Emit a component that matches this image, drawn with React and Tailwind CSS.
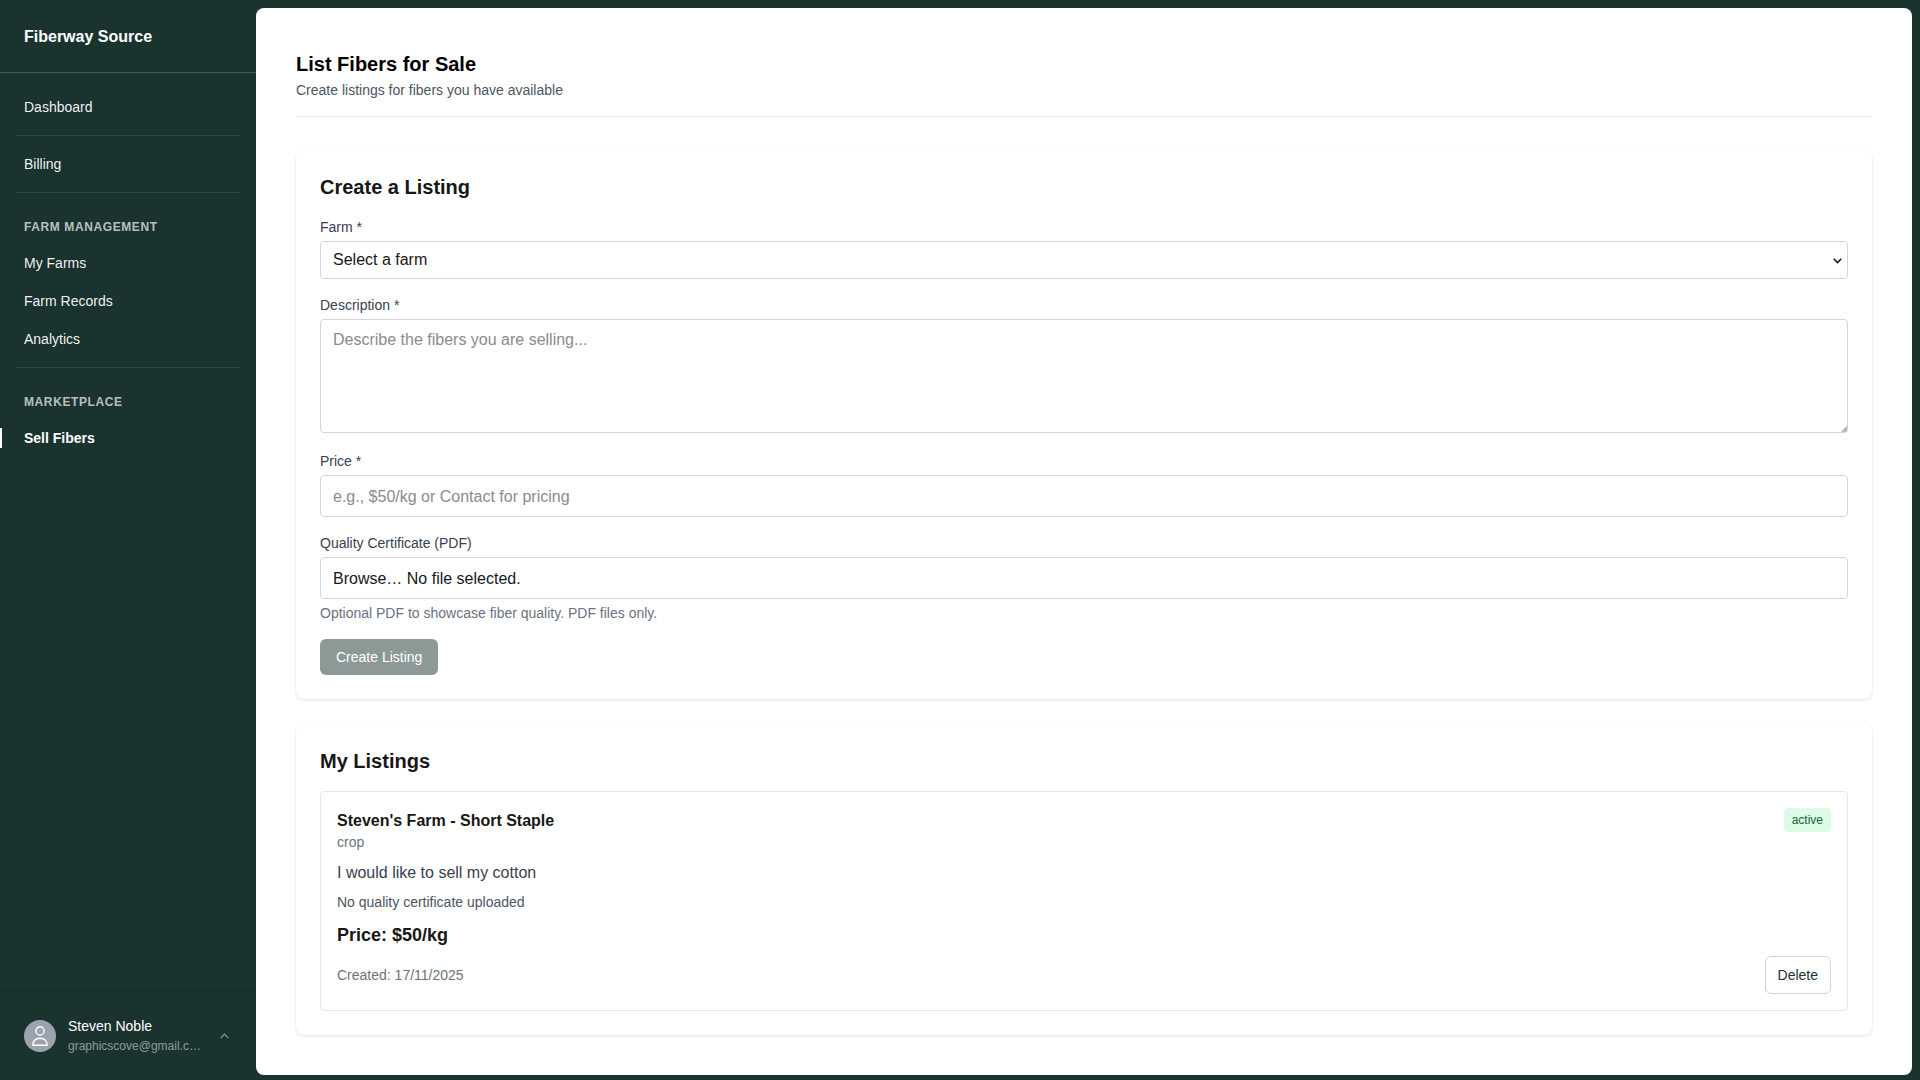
import React, { useState } from 'react';

const NavItem = ({ label, active }) => (
  <a
    href="#"
    className={`my-0.5 box-content flex h-5 items-center border-l-2 pl-[22px] text-sm ${active ? 'border-white font-bold text-white' : 'border-transparent text-white/95'}`}
  >
    {label}
  </a>
);

const Divider = () => (
  <div className="py-4">
    <div className="mx-4 h-px bg-white/10" />
  </div>
);

const SectionTitle = ({ children }) => (
  <h3 className="px-6 pb-0.5 text-xs font-bold uppercase tracking-[0.6px] text-white/70">{children}</h3>
);

const Sidebar = () => (
  <aside className="flex w-64 shrink-0 flex-col">
    <div className="border-b border-white/20 px-6 pb-[23px] pt-[25px]">
      <div className="text-base font-bold leading-6 text-white">Fiberway Source</div>
    </div>

    <nav className="flex-1 pt-[22px]">
      <NavItem label="Dashboard" />
      <Divider />
      <NavItem label="Billing" />
      <Divider />

      {/* Farm management */}
      <div className="flex flex-col gap-3.5 pt-2.5">
        <SectionTitle>Farm Management</SectionTitle>
        <NavItem label="My Farms" />
        <NavItem label="Farm Records" />
        <NavItem label="Analytics" />
      </div>
      <Divider />

      {/* Marketplace */}
      <div className="flex flex-col gap-3.5 pt-2.5">
        <SectionTitle>Marketplace</SectionTitle>
        <NavItem label="Sell Fibers" active />
      </div>
    </nav>

    {/* User menu */}
    <div className="flex h-[89px] items-center border-t border-black/10 px-6">
      <div className="flex size-8 shrink-0 items-center justify-center rounded-full bg-[#9ca3af]">
        <svg width="16" height="20" viewBox="0 0 16 20" fill="none" stroke="white" strokeWidth="1.4">
          <circle cx="8" cy="4.9" r="4.1" />
          <path d="M.8 19.2C.8 15 3.8 12.2 8 12.2s7.2 2.8 7.2 7z" strokeLinejoin="round" />
        </svg>
      </div>
      <div className="ml-3 w-[134px] whitespace-nowrap">
        <div className="pb-px text-sm leading-5 text-white">Steven Noble</div>
        <div className="pb-px text-xs leading-[18px] text-white/50">graphicscove@gmail.c…</div>
      </div>
      <svg className="ml-[18px]" width="9" height="6" viewBox="0 0 9 6" fill="none" stroke="#8c9997" strokeWidth="1.2">
        <path d="M.6 5.2 4.5 1.2l3.900 4" />
      </svg>
    </div>
  </aside>
);

const labelClass = 'mb-1 block text-sm text-[#374151]';
const fieldClass = 'block w-full rounded border border-[#d1d5db] bg-white px-3 text-base';

const CreateListing = () => {
  const [description, setDescription] = useState('');
  const [price, setPrice] = useState('');

  return (
    <section className="rounded-lg bg-white p-6 shadow-[0_1px_3px_rgba(0,0,0,0.12)]">
      <h2 className="mb-4 text-xl font-bold leading-7 text-[#171717]">Create a Listing</h2>
      <form>
        <div className="mb-4">
          <label className={labelClass}>Farm *</label>
          <button type="button" className="flex h-[38px] w-full items-center justify-between rounded border border-[#d1d5db] pl-3 pr-[5px] text-base text-[#171717]">
            <span>Select a farm</span>
            <svg className="mt-px" width="9" height="6" viewBox="0 0 9 6" fill="none" stroke="#171717" strokeWidth="1.5">
              <path d="M.7.8 4.5 4.6 8.3.8" />
            </svg>
          </button>
        </div>

        <div className="relative mb-[18px]">
          <label className={labelClass}>Description *</label>
          <textarea
            rows={4}
            value={description}
            onChange={(e) => setDescription(e.target.value)}
            placeholder="Describe the fibers you are selling..."
            className={`${fieldClass} h-[114px] resize-none py-2 placeholder:text-[#8b8b8b]`}
          />
          {/* resize grip */}
          <svg className="absolute bottom-px right-px" width="6" height="6" viewBox="0 0 6 6">
            <path d="M6 0v6H0z" fill="#c4c4c4" />
            <path d="M1 5.500 5.500 1M3.500 5.500l2-2" stroke="#8f8f8f" strokeWidth=".6" />
          </svg>
        </div>

        <div className="mb-4">
          <label className={labelClass}>Price *</label>
          <input
            type="text"
            value={price}
            onChange={(e) => setPrice(e.target.value)}
            placeholder="e.g., $50/kg or Contact for pricing"
            className={`${fieldClass} h-[42px] pt-0.5 placeholder:text-[#8b8b8b]`}
          />
        </div>

        <div className="mb-4">
          <label className={labelClass}>Quality Certificate (PDF)</label>
          <div className={`${fieldClass} pb-[7px] pt-[9px] text-[#171717]`}>Browse… No file selected.</div>
          <p className="mt-1 text-sm text-[#6b7280]">Optional PDF to showcase fiber quality. PDF files only.</p>
        </div>

        <button type="button" className="block rounded-md bg-[#8c9996] px-4 py-2 text-sm text-white">
          Create Listing
        </button>
      </form>
    </section>
  );
};

const listings = [
  {
    id: 1,
    title: "Steven's Farm - Short Staple",
    type: 'crop',
    description: 'I would like to sell my cotton',
    price: '$50/kg',
    created: '17/11/2025',
    status: 'active',
  },
];

const MyListings = () => (
  <section className="mt-6 rounded-lg bg-white p-6 shadow-[0_1px_3px_rgba(0,0,0,0.12)]">
    <h2 className="mb-4 text-xl font-bold leading-7 text-[#171717]">My Listings</h2>
    {listings.map((item) => (
      <div key={item.id} className="rounded border border-[#e5e7eb] p-4">
        <div className="flex items-start justify-between">
          <div>
            <h3 className="pt-px text-base font-bold leading-[23px] text-[#171717]">{item.title}</h3>
            <p className="text-sm text-[#6b7280]">{item.type}</p>
          </div>
          <span className="rounded bg-[#dcfce7] px-2 py-1 text-xs text-[#166534]">{item.status}</span>
        </div>
        <p className="mt-[9px] text-base text-[#374151]">{item.description}</p>
        <p className="mt-[7px] text-sm text-[#4b5563]">No quality certificate uploaded</p>
        <p className="mt-[9px] text-lg font-bold leading-7 text-[#171717]">Price: {item.price}</p>
        <div className="mt-[7px] flex items-center justify-between">
          <span className="text-sm text-[#6b7280]">Created: {item.created}</span>
          <button className="rounded-md border border-[#d1d5db] bg-white px-3 py-2 text-sm text-[#1a332e]">Delete</button>
        </div>
      </div>
    ))}
  </section>
);

export default function App() {
  return (
    <div className="flex h-screen overflow-hidden bg-[#1a332f] font-['Liberation_Sans',Arial,sans-serif]">
      <Sidebar />
      <main className="mb-[5px] mr-2 mt-2 flex-1 rounded-lg bg-white p-10">
        <header className="mb-8 border-b border-[#e5e7eb] pb-4">
          <h1 className="text-xl font-bold leading-8 text-black">List Fibers for Sale</h1>
          <p className="text-sm text-[#4b5563]">Create listings for fibers you have available</p>
        </header>
        <CreateListing />
        <MyListings />
      </main>
    </div>
  );
}
